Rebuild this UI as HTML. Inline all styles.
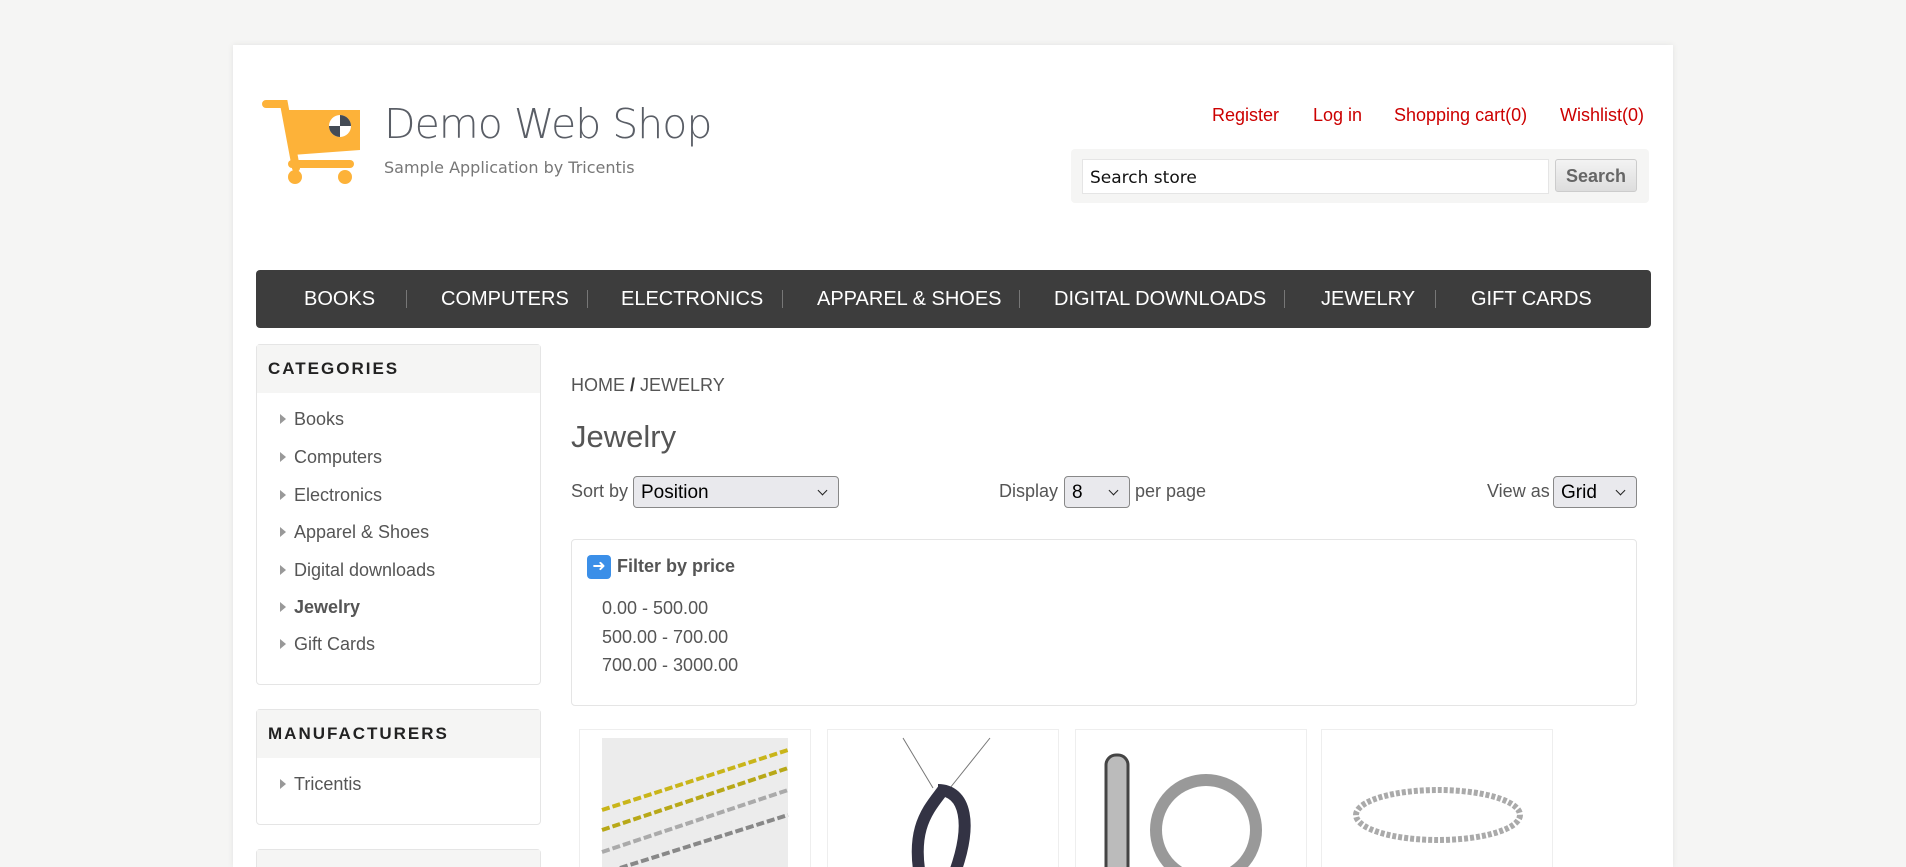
<!DOCTYPE html>
<html><head><meta charset="utf-8"><style>
*{margin:0;padding:0;box-sizing:border-box}
html,body{width:1906px;height:867px;overflow:hidden}
body{background:#f5f5f4;font-family:"Liberation Sans",sans-serif;color:#555;position:relative}
.a{position:absolute}
.wrap{left:233px;top:45px;width:1440px;height:822px;background:#fff;box-shadow:0 0 6px rgba(0,0,0,.08)}
.lnk{color:#c00;font-size:18px;top:105px}
.nav{left:256px;top:270px;width:1395px;height:58px;background:#3d3d3d;border-radius:4px}
.nav span{position:absolute;top:18px;color:#fff;font-size:20px}
.sep{position:absolute;top:20px;width:1px;height:18px;background:#777}
.blk{border:1px solid #e5e5e5;border-radius:4px;background:#fff}
.bh{background:#f5f5f4;height:48px;font-weight:bold;font-size:17px;letter-spacing:2px;color:#222;padding:14px 0 0 11px}
.it{position:absolute;left:37px;font-size:18px;color:#555}
.it:before{content:"";position:absolute;left:-14px;top:5px;border-left:6px solid #999;border-top:5px solid transparent;border-bottom:5px solid transparent}
.sel{border:1px solid #888;border-radius:4px;background:#e9e9ed;color:#000;font-size:19px;padding:5px 7px;height:32px}
.sel:after{content:"";position:absolute;right:12px;top:10px;width:6px;height:6px;border-right:1.5px solid #222;border-bottom:1.5px solid #222;transform:rotate(45deg)}
.pb{border:1px solid #eee;width:232px;height:160px;top:729px;overflow:hidden}
</style></head><body>
<div class="a wrap"></div>
<svg class="a" style="left:262px;top:100px" width="104" height="86" viewBox="0 0 104 86">
<path d="M4 4h18l12 64" stroke="#fdb239" stroke-width="8" fill="none" stroke-linecap="round"/>
<path d="M22 10h76v40l-68 5z" fill="#fdb239"/>
<rect x="26" y="60" width="66" height="8" rx="4" fill="#fdb239"/>
<circle cx="33" cy="77" r="7" fill="#fdb239"/><circle cx="83" cy="77" r="7" fill="#fdb239"/>
<circle cx="78" cy="26" r="11" fill="#fff"/><path d="M78 15a11 11 0 0 1 11 11h-11zM78 26v11a11 11 0 0 1-11-11z" fill="#444b55"/>
</svg>
<div class="a" style="left:384px;top:100px;font-size:41px;color:#5a5e66;font-family:'DejaVu Sans',sans-serif;font-weight:200;letter-spacing:-1px">Demo Web Shop</div>
<div class="a" style="left:384px;top:158px;font-size:16px;color:#777;font-family:'DejaVu Sans',sans-serif">Sample Application by Tricentis</div>
<div class="a lnk" style="left:1212px">Register</div>
<div class="a lnk" style="left:1313px">Log in</div>
<div class="a lnk" style="left:1394px">Shopping cart(0)</div>
<div class="a lnk" style="left:1560px">Wishlist(0)</div>
<div class="a" style="left:1071px;top:149px;width:578px;height:54px;background:#f5f5f4;border-radius:4px"></div>
<div class="a" style="left:1082px;top:159px;width:467px;height:35px;background:#fff;border:1px solid #e5e5e5;font-size:17px;color:#111;padding:8px 7px;font-family:'DejaVu Sans',sans-serif">Search store</div>
<div class="a" style="left:1555px;top:159px;width:82px;height:33px;background:linear-gradient(#f3f3f3,#ddd);border:1px solid #ccc;border-radius:3px;font-size:18px;font-weight:bold;color:#666;text-align:center;padding-top:6px">Search</div>
<div class="a nav">
<span style="left:48px">BOOKS</span><i class="sep" style="left:150px"></i>
<span style="left:185px">COMPUTERS</span><i class="sep" style="left:331px"></i>
<span style="left:365px">ELECTRONICS</span><i class="sep" style="left:526px"></i>
<span style="left:561px">APPAREL &amp; SHOES</span><i class="sep" style="left:763px"></i>
<span style="left:798px">DIGITAL DOWNLOADS</span><i class="sep" style="left:1028px"></i>
<span style="left:1065px">JEWELRY</span><i class="sep" style="left:1179px"></i>
<span style="left:1215px">GIFT CARDS</span>
</div>
<div class="a blk" style="left:256px;top:344px;width:285px;height:341px"><div class="bh">CATEGORIES</div>
<div class="it" style="top:64px">Books</div><div class="it" style="top:102px">Computers</div><div class="it" style="top:140px">Electronics</div><div class="it" style="top:177px">Apparel &amp; Shoes</div><div class="it" style="top:215px">Digital downloads</div><div class="it" style="top:252px;font-weight:bold">Jewelry</div><div class="it" style="top:289px">Gift Cards</div></div>
<div class="a blk" style="left:256px;top:709px;width:285px;height:116px"><div class="bh">MANUFACTURERS</div><div class="it" style="top:64px">Tricentis</div></div>
<div class="a blk" style="left:256px;top:849px;width:285px;height:40px"><div class="bh"></div></div>
<div class="a" style="left:571px;top:375px;font-size:18px">HOME <b style="color:#333">/</b> JEWELRY</div>
<div class="a" style="left:571px;top:419px;font-size:31px">Jewelry</div>
<div class="a" style="left:571px;top:481px;font-size:18px">Sort by</div>
<div class="a sel" style="left:633px;top:476px;width:206px">Position</div>
<div class="a" style="left:999px;top:481px;font-size:18px">Display</div>
<div class="a sel" style="left:1064px;top:476px;width:66px">8</div>
<div class="a" style="left:1135px;top:481px;font-size:18px">per page</div>
<div class="a" style="left:1487px;top:481px;font-size:18px">View as</div>
<div class="a sel" style="left:1553px;top:476px;width:84px">Grid</div>
<div class="a" style="left:571px;top:539px;width:1066px;height:167px;border:1px solid #e5e5e5;border-radius:4px"></div>
<div class="a" style="left:587px;top:555px;width:24px;height:24px;border-radius:4px;background:#3b8fe8;color:#fff;font-size:16px;text-align:center;line-height:24px">➜</div>
<div class="a" style="left:617px;top:556px;font-size:18px;font-weight:bold">Filter by price</div>
<div class="a" style="left:602px;top:598px;font-size:18px">0.00 - 500.00</div>
<div class="a" style="left:602px;top:627px;font-size:18px">500.00 - 700.00</div>
<div class="a" style="left:602px;top:655px;font-size:18px">700.00 - 3000.00</div>
<div class="a pb" style="left:579px"><svg width="232" height="160"><rect x="22" y="8" width="186" height="130" fill="#ececec"/><g fill="none" stroke-width="4" stroke-dasharray="8 3"><path d="M22 80L208 20" stroke="#c9b51a"/><path d="M22 100L208 38" stroke="#b8a818"/><path d="M22 122L208 60" stroke="#aaa"/><path d="M40 138L208 85" stroke="#888"/></g></svg></div>
<div class="a pb" style="left:827px"><svg width="232" height="160"><path d="M75 8l30 50M162 8l-40 50" stroke="#777" fill="none"/><path d="M110 60c25 0 40 30 10 100M115 60c-15 20-35 40-20 100" stroke="#334" stroke-width="12" fill="none"/></svg></div>
<div class="a pb" style="left:1075px"><svg width="232" height="160"><rect x="30" y="25" width="22" height="135" rx="10" fill="#bbb" stroke="#444" stroke-width="3"/><circle cx="130" cy="100" r="50" fill="none" stroke="#999" stroke-width="12"/></svg></div>
<div class="a pb" style="left:1321px"><svg width="232" height="160"><ellipse cx="116" cy="85" rx="82" ry="25" fill="none" stroke="#aaa" stroke-width="6" stroke-dasharray="4 2"/></svg></div>
</body></html>
